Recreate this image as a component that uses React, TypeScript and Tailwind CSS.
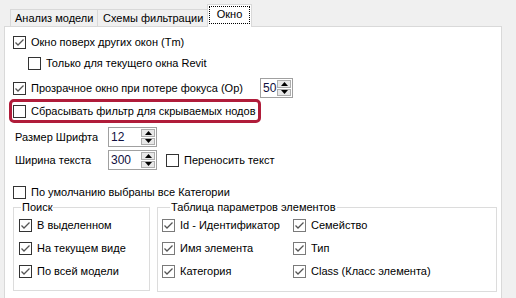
import React from "react";

function Check({ checked = false, light = false }: { checked?: boolean; light?: boolean }) {
  return (
    <span
      className={
        light
          ? "w-[13px] h-[13px] shrink-0 border border-[#7a7a7a] bg-white flex items-center justify-center"
          : "w-[13px] h-[13px] shrink-0 border border-[#333333] bg-white flex items-center justify-center"
      }
    >
      {checked && (
        <svg width="11" height="11" viewBox="0 0 11 11">
          <polyline points="1.5,5.5 4,8 9.5,2.5" fill="none" stroke="#555" strokeWidth="1.3" />
        </svg>
      )}
    </span>
  );
}

function Spin({ value, wide = false }: { value: string; wide?: boolean }) {
  return (
    <div
      className={
        wide
          ? "w-[49px] h-[20px] shrink-0 border border-[#a0a0a0] bg-white flex items-stretch"
          : "w-[33px] h-[20px] shrink-0 border border-[#a0a0a0] bg-white flex items-stretch"
      }
    >
      <span className="flex-1 pl-[2px] text-[12px] flex items-center text-[#101040]">{value}</span>
      <div className="w-[16px] flex flex-col gap-[1px] p-[1px]">
        <div className="flex-1 border border-[#adadad] bg-[#e8e8e8] flex items-center justify-center">
          <svg width="7" height="4" viewBox="0 0 7 4">
            <polygon points="0,4 7,4 3.5,0" fill="#000" />
          </svg>
        </div>
        <div className="flex-1 border border-[#adadad] bg-[#e8e8e8] flex items-center justify-center">
          <svg width="7" height="4" viewBox="0 0 7 4">
            <polygon points="0,0 7,0 3.5,4" fill="#000" />
          </svg>
        </div>
      </div>
    </div>
  );
}

export default function App() {
  return (
    <div className="w-[516px] h-[298px] bg-[#f0f0f0] overflow-hidden font-['Liberation_Sans',Arial,sans-serif] text-[11px] text-black leading-none">
      <div className="flex items-end h-[26px] pl-[10px] relative z-10">
        <div className="h-[17px] w-[87px] border-t border-l border-[#d9d9d9] bg-[#f0f0f0] flex items-center pl-[4px]">
          Анализ модели
        </div>
        <div className="h-[17px] w-[110px] border-t border-l border-[#d9d9d9] bg-[#f0f0f0] flex items-center pl-[5px]">
          Схемы фильтрации
        </div>
        <div className="h-[23px] w-[45px] border-t border-l border-r border-[#d9d9d9] bg-white pt-[1px] px-[1px] pb-[3px] -mb-px">
          <div className="h-full border border-dotted border-black flex items-center justify-center pb-[1px]">
            Окно
          </div>
        </div>
      </div>
      <div className="ml-[4px] w-[498px] h-[280px] border border-[#d9d9d9] bg-white flex flex-col">
        <div className="mt-[5px] h-[21px] pl-[8px] flex items-center gap-[5px]">
          <Check checked />
          <span>Окно поверх других окон (Tm)</span>
        </div>
        <div className="h-[21px] pl-[23px] flex items-center gap-[5px]">
          <Check />
          <span>Только для текущего окна Revit</span>
        </div>
        <div className="mt-[4px] h-[20px] pl-[8px] flex items-center gap-[5px]">
          <Check checked />
          <span className="w-[224px]">Прозрачное окно при потере фокуса (Op)</span>
          <Spin value="50" />
        </div>
        <div className="mt-[1px] ml-[4px] w-[252px] h-[24px] border-[3px] border-[#b01c3a] rounded-[5px] flex items-center pl-[1px] gap-[5px]">
          <Check />
          <span>Сбрасывать фильтр для скрываемых нодов</span>
        </div>
        <div className="mt-[4px] h-[20px] pl-[10px] flex items-center">
          <span className="w-[93px]">Размер Шрифта</span>
          <Spin value="12" wide />
        </div>
        <div className="mt-[3px] h-[20px] pl-[10px] flex items-center">
          <span className="w-[93px]">Ширина текста</span>
          <Spin value="300" wide />
          <span className="ml-[9px]">
            <Check />
          </span>
          <span className="ml-[5px]">Переносить текст</span>
        </div>
        <div className="mt-[14px] h-[17px] pl-[8px] flex items-center gap-[5px]">
          <Check />
          <span>По умолчанию выбраны все Категории</span>
        </div>
        <div className="mt-[1px] pl-[8px] flex items-start gap-[7px]">
          <fieldset className="w-[137px] h-[89px] border border-[#dcdcdc] px-[5px]">
            <legend className="ml-[2px] px-[1px] leading-[11px]">Поиск</legend>
            <div className="mt-[1px] flex flex-col">
              <div className="h-[23px] flex items-center gap-[5px]">
                <Check checked />
                <span>В выделенном</span>
              </div>
              <div className="h-[23px] flex items-center gap-[5px]">
                <Check checked />
                <span>На текущем виде</span>
              </div>
              <div className="h-[23px] flex items-center gap-[5px]">
                <Check checked />
                <span>По всей модели</span>
              </div>
            </div>
          </fieldset>
          <fieldset className="w-[340px] h-[90px] border border-[#dcdcdc] px-[4px]">
            <legend className="ml-[8px] px-[1px] leading-[11px]">Таблица параметров элементов</legend>
            <div className="mt-[1px] grid grid-cols-[131px_1fr]">
              <div className="h-[23px] flex items-center gap-[5px]">
                <Check checked light />
                <span>Id - Идентификатор</span>
              </div>
              <div className="h-[23px] flex items-center gap-[5px]">
                <Check checked light />
                <span>Семейство</span>
              </div>
              <div className="h-[23px] flex items-center gap-[5px]">
                <Check checked light />
                <span>Имя элемента</span>
              </div>
              <div className="h-[23px] flex items-center gap-[5px]">
                <Check checked light />
                <span>Тип</span>
              </div>
              <div className="h-[23px] flex items-center gap-[5px]">
                <Check checked light />
                <span>Категория</span>
              </div>
              <div className="h-[23px] flex items-center gap-[5px]">
                <Check checked light />
                <span>Class (Класс элемента)</span>
              </div>
            </div>
          </fieldset>
        </div>
      </div>
    </div>
  );
}
